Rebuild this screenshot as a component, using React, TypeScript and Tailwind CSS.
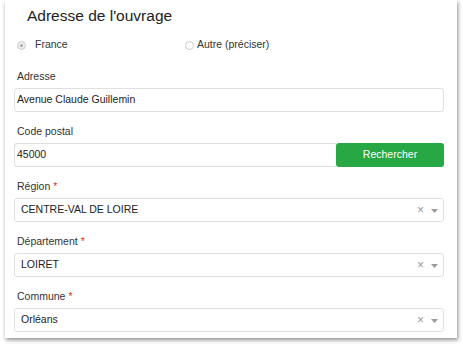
function Label({ text, required }: { text: string; required?: boolean }) {
  return (
    <div className="h-[21px] pl-[3px] pt-[2px] text-[10.5px] leading-[14px] text-[#333]">
      {text}
      {required && <span className="ml-[3px] text-[#e0332b]">*</span>}
    </div>
  )
}

function Select({ value }: { value: string }) {
  return (
    <div className="h-6 flex items-center border border-[#e0e0e0] rounded-[3px] pl-[6px] pr-[5px] text-[10.5px] text-[#222]">
      <span className="flex-1">{value}</span>
      <span className="text-[12px] text-[#9a9a9a] leading-none mr-[7px]">×</span>
      <svg width="7" height="4" viewBox="0 0 7 4" className="mt-[1px]">
        <path d="M0 0h7L3.5 4z" fill="#9a9a9a" />
      </svg>
    </div>
  )
}

export default function App() {
  return (
    <div className="w-[463px] h-[348px] bg-white font-['Liberation_Sans',Arial,sans-serif]">
      <div className="ml-[5px] w-[452px] h-[338px] bg-white shadow-[1px_2px_4px_rgba(0,0,0,0.45)] pl-[9px] pr-[13px]">
        <div className="h-[34px] pl-[13px] pt-[6px] text-[15.5px] leading-[20px] text-[#222]">
          Adresse de l'ouvrage
        </div>
        <div className="h-[22px] flex items-center text-[10.5px] text-[#333]">
          <div className="w-[171px] flex items-center pl-[3px]">
            <span className="w-[9px] h-[9px] rounded-full border border-[#ccc] bg-[#eee] flex items-center justify-center">
              <span className="w-[3px] h-[3px] rounded-full bg-[#aaa]" />
            </span>
            <span className="ml-[9px]">France</span>
          </div>
          <div className="flex items-center">
            <span className="w-[9px] h-[9px] rounded-full border border-[#ccc] bg-white" />
            <span className="ml-[3px]">Autre (préciser)</span>
          </div>
        </div>
        <div className="h-[11px]" />

        <Label text="Adresse" />
        <div className="h-6 flex items-center border border-[#e0e0e0] rounded-[3px] pl-[2px] text-[10.5px] text-[#222]">
          Avenue Claude Guillemin
        </div>

        <div className="mt-[10px]">
          <Label text="Code postal" />
          <div className="flex h-6">
            <div className="flex-1 flex items-center border border-[#e0e0e0] border-r-0 rounded-l-[3px] pl-[2px] text-[10.5px] text-[#222]">
              45000
            </div>
            <button className="w-[108px] bg-[#28a745] text-white text-[10.5px] rounded-[3px]">Rechercher</button>
          </div>
        </div>

        <div className="mt-[10px]">
          <Label text="Région" required />
          <Select value="CENTRE-VAL DE LOIRE" />
        </div>
        <div className="mt-[10px]">
          <Label text="Département" required />
          <Select value="LOIRET" />
        </div>
        <div className="mt-[10px]">
          <Label text="Commune" required />
          <Select value="Orléans" />
        </div>
      </div>
    </div>
  )
}
